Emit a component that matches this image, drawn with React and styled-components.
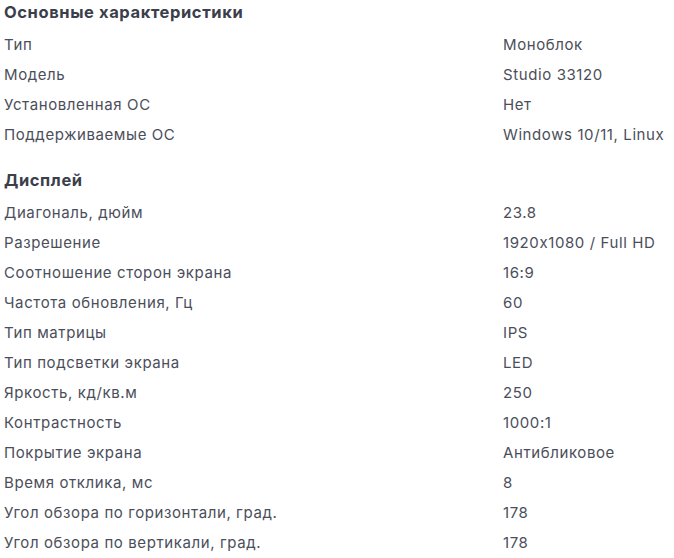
import React from 'react';
import styled, { createGlobalStyle } from 'styled-components';

const GlobalStyle = createGlobalStyle`
  body {
    margin: 0;
    background: #fff;
    font-family: 'Inter', 'Noto Sans', sans-serif;
    font-feature-settings: 'calt' 0;
  }
`;

const Page = styled.div`
  display: flex;
  flex-direction: column;
  gap: 20px;
  padding: 1px 4px 0;
  width: 674px;
  box-sizing: border-box;
`;

const Section = styled.section`
  display: flex;
  flex-direction: column;
`;

const Heading = styled.h2`
  margin: 0 0 5px;
  font-size: 16.5px;
  line-height: 23px;
  font-weight: 700;
  letter-spacing: 0.6px;
  color: #3b3e4b;
`;

const Row = styled.div`
  display: grid;
  grid-template-columns: 499px 1fr;
  height: 30px;
  align-items: center;
  font-size: 15px;
  letter-spacing: 0.6px;
  color: #4b4e5a;
  white-space: nowrap;
`;

const Key = styled.span`
  padding-top: 1px;
`;

const Value = styled.span`
  padding-top: 1px;
`;

const specs = [
  {
    title: 'Основные характеристики',
    rows: [
      ['Тип', 'Моноблок'],
      ['Модель', 'Studio 33120'],
      ['Установленная ОС', 'Нет'],
      ['Поддерживаемые ОС', 'Windows 10/11, Linux'],
    ],
  },
  {
    title: 'Дисплей',
    rows: [
      ['Диагональ, дюйм', '23.8'],
      ['Разрешение', '1920x1080 / Full HD'],
      ['Соотношение сторон экрана', '16:9'],
      ['Частота обновления, Гц', '60'],
      ['Тип матрицы', 'IPS'],
      ['Тип подсветки экрана', 'LED'],
      ['Яркость, кд/кв.м', '250'],
      ['Контрастность', '1000:1'],
      ['Покрытие экрана', 'Антибликовое'],
      ['Время отклика, мс', '8'],
      ['Угол обзора по горизонтали, град.', '178'],
      ['Угол обзора по вертикали, град.', '178'],
    ],
  },
];

export default function App() {
  return (
    <>
      <GlobalStyle />
      <Page>
        {specs.map((s) => (
          <Section key={s.title}>
            <Heading>{s.title}</Heading>
            {s.rows.map(([k, v]) => (
              <Row key={k}>
                <Key>{k}</Key>
                <Value>{v}</Value>
              </Row>
            ))}
          </Section>
        ))}
      </Page>
    </>
  );
}
